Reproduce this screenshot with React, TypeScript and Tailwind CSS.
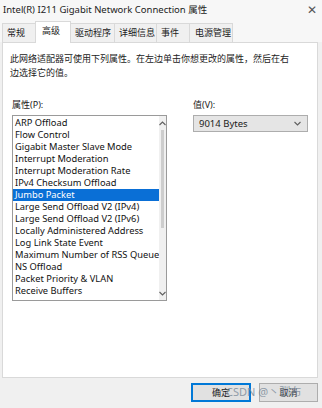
import React from "react";

const font = { fontFamily: '"Noto Sans", "Noto Sans CJK SC", sans-serif' };

const items = [
  "ARP Offload",
  "Flow Control",
  "Gigabit Master Slave Mode",
  "Interrupt Moderation",
  "Interrupt Moderation Rate",
  "IPv4 Checksum Offload",
  "Jumbo Packet",
  "Large Send Offload V2 (IPv4)",
  "Large Send Offload V2 (IPv6)",
  "Locally Administered Address",
  "Log Link State Event",
  "Maximum Number of RSS Queue",
  "NS Offload",
  "Packet Priority & VLAN",
  "Receive Buffers",
];

function Chevron({ up }: { up?: boolean }) {
  return (
    <svg width="7" height="5" viewBox="0 0 7 5">
      <path
        d={up ? "M0.5 4 L3.5 1 L6.5 4" : "M0.5 1 L3.5 4 L6.5 1"}
        fill="none"
        stroke="#606060"
        strokeWidth="1.1"
      />
    </svg>
  );
}

export default function App() {
  const tabs = ["常规", "高级", "驱动程序", "详细信息", "事件", "电源管理"];
  return (
    <div
      className="w-[322px] h-[408px] bg-[#f0f0f0] text-[#1a1a1a] flex flex-col overflow-hidden relative"
      style={font}
    >
      {/* title bar */}
      <div className="h-[19px] bg-[#f7f7f7] flex items-center justify-between pl-[3px] pr-[5px]">
        <span className="text-[9.5px] leading-none text-[#222]">
          Intel(R) I211 Gigabit Network Connection 属性
        </span>
        <span className="text-[12px] leading-none text-[#555] font-light">✕</span>
      </div>
      {/* tabs */}
      <div className="h-[23px] flex items-end pl-[2px] bg-[#f7f7f7]">
        {tabs.map((t, i) =>
          i === 1 ? (
            <div
              key={t}
              className="h-[22px] w-[36px] bg-white border border-b-0 border-[#d9d9d9] relative top-[1px] z-10 flex items-start pt-[4px] pl-[6px] text-[9px] leading-none"
            >
              {t}
            </div>
          ) : (
            <div
              key={t}
              className={
                "h-[19px] border-t border-l border-[#d9d9d9] flex items-start pt-[4px] pl-[4px] text-[9px] leading-none bg-[#f0f0f0] " +
                (i === 0
                  ? "w-[33px]"
                  : i === 2
                  ? "w-[43px] border-l-0"
                  : i === 3
                  ? "w-[42px]"
                  : i === 4
                  ? "w-[33px]"
                  : "w-[44px] pl-[5px] border-r")
              }
            >
              {t}
            </div>
          )
        )}
      </div>
      {/* panel */}
      <div className="mx-[2px] mr-[4px] h-[336px] bg-white border border-[#d9d9d9] flex flex-col px-[7px] pt-[9px]">
        <div className="text-[9px] leading-[14px] text-[#222] pr-[16px]">
          此网络适配器可使用下列属性。在左边单击你想更改的属性，然后在右边选择它的值。
        </div>
        <div className="flex mt-[20px] gap-[26px]">
          {/* properties */}
          <div className="flex flex-col pl-[2px]">
            <div className="text-[9px] leading-none h-[15px]">属性(P):</div>
            <div className="w-[155px] h-[186px] border border-[#9a9a9a] flex">
              <div className="flex-1 flex flex-col pt-[1px]">
                {items.map((it) => (
                  <div
                    key={it}
                    className={
                      "h-[12px] leading-[12px] text-[9.3px] pl-[2px] whitespace-nowrap overflow-hidden " +
                      (it === "Jumbo Packet" ? "bg-[#0a6fd6] text-white" : "text-[#111]")
                    }
                  >
                    {it}
                  </div>
                ))}
              </div>
              <div className="w-[14px] bg-[#f0f0f0] flex flex-col">
                <div className="h-[14px] flex items-center justify-center">
                  <Chevron up />
                </div>
                <div className="mx-[2px] h-[98px] bg-[#cdcdcd]" />
                <div className="flex-1" />
                <div className="h-[14px] flex items-center justify-center">
                  <Chevron />
                </div>
              </div>
            </div>
          </div>
          {/* value */}
          <div className="flex flex-col">
            <div className="text-[9px] leading-none h-[15px]">值(V):</div>
            <div className="w-[115px] h-[17px] border border-[#adadad] bg-[#e5e5e5] flex items-center justify-between pl-[5px] pr-[6px]">
              <span className="text-[9.5px] leading-none">9014 Bytes</span>
              <Chevron />
            </div>
          </div>
        </div>
      </div>
      {/* buttons */}
      <div className="flex justify-end gap-[8px] pr-[4px] mt-[5px]">
        <div className="w-[60px] h-[19px] border-2 border-[#0078d7] bg-[#e1e1e1] flex items-center justify-center text-[9px]">
          确定
        </div>
        <div className="w-[59px] h-[19px] border border-[#adadad] bg-[#e1e1e1] flex items-center justify-center text-[9px]">
          取消
        </div>
      </div>
      {/* watermark */}
      <div className="absolute left-[226px] top-[386px] text-[11px] leading-none text-[#7a8a99] opacity-80 whitespace-nowrap">
        CSDN @丶驯布
      </div>
    </div>
  );
}
